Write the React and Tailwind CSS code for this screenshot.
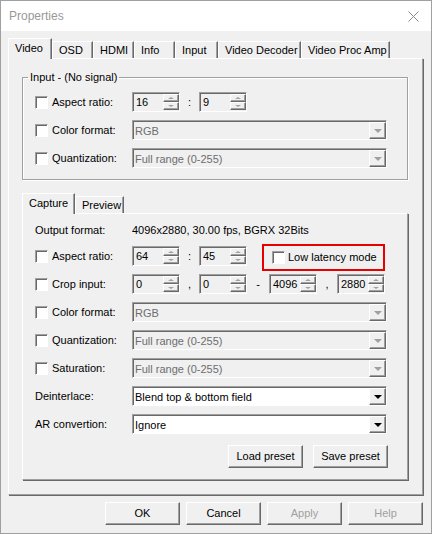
import React from 'react';

// classic 3D borders
const raised =
  'border border-t-white border-l-white border-r-[#696969] border-b-[#696969] shadow-[inset_-1px_-1px_0_#a0a0a0]';
const sunken =
  'border border-t-[#a0a0a0] border-l-[#a0a0a0] border-r-white border-b-white shadow-[inset_1px_1px_0_#696969]';

function Check() {
  return <span className={`block w-[13px] h-[13px] shrink-0 bg-white ${sunken}`} />;
}

function Label({ text, check = true }) {
  if (!check) return <span className="w-[97px] shrink-0">{text}</span>;
  return (
    <>
      <Check />
      <span className="ml-[4px] w-[80px] shrink-0">{text}</span>
    </>
  );
}

function Spin({ value }) {
  return (
    <div className={`flex h-[20px] w-[48px] shrink-0 bg-[#f0f0f0] ${sunken}`}>
      <span className="flex-1 pl-[3px] leading-[18px]">{value}</span>
      <div className="flex flex-col w-[16px] pt-px">
        <div className={`h-[8px] flex items-center justify-center bg-[#f0f0f0] ${raised}`}>
          <span className="w-0 h-0 border-x-[3px] border-x-transparent border-b-[2px] border-b-[#a0a0a0]" />
        </div>
        <div className={`h-[8px] flex items-center justify-center bg-[#f0f0f0] ${raised}`}>
          <span className="w-0 h-0 border-x-[3px] border-x-transparent border-t-[2px] border-t-[#a0a0a0]" />
        </div>
      </div>
    </div>
  );
}

function Combo({ value, enabled = false }) {
  return (
    <div className={`flex h-[20px] w-[255px] shrink-0 ${sunken} ${enabled ? 'bg-white' : 'bg-[#f0f0f0]'}`}>
      <span className={`flex-1 pl-[2px] pt-px leading-[18px] ${enabled ? 'text-black' : 'text-[#6d6d6d]'}`}>
        {value}
      </span>
      <div className={`w-[17px] mt-px flex items-center justify-center bg-[#f0f0f0] ${raised}`}>
        <span
          className={`w-0 h-0 border-x-[4px] border-x-transparent border-t-[4px] ${
            enabled ? 'border-t-black' : 'border-t-[#a0a0a0]'
          }`}
        />
      </div>
    </div>
  );
}

function Sep({ text, w }) {
  return <span className={`${w} shrink-0 text-center`}>{text}</span>;
}

function Btn({ children, disabled }) {
  return (
    <button
      type="button"
      className={`w-[75px] h-[23px] flex items-center justify-center bg-[#f0f0f0] ${raised} ${
        disabled ? 'text-[#a0a0a0]' : 'text-black'
      }`}
    >
      {children}
    </button>
  );
}

function Tab({ label, w, active }) {
  return (
    <div
      className={`${w} shrink-0 flex items-center pl-[6px] bg-[#f0f0f0] border-t border-l border-r border-t-white border-l-white border-r-[#696969] shadow-[inset_-1px_0_0_#a0a0a0] ${
        active ? 'h-[21px] -mb-px relative z-10 pb-[2px]' : 'h-[17px]'
      }`}
    >
      {label}
    </div>
  );
}

const Row = ({ children }) => <div className="flex items-center h-[20px]">{children}</div>;

const mainTabs = [
  ['Video', 'w-[44px]', true],
  ['OSD', 'w-[41px]'],
  ['HDMI', 'w-[41px]'],
  ['Info', 'w-[41px]'],
  ['Input', 'w-[43px]'],
  ['Video Decoder', 'w-[83px]'],
  ['Video Proc Amp', 'w-[89px]'],
];

export default function App() {
  return (
    <div className="w-[432px] h-[534px] border border-[#a0a0a0] bg-[#f0f0f0] font-['Liberation_Sans',Arial,sans-serif] text-[11px] text-black flex flex-col overflow-hidden">
      {/* title bar */}
      <div className="h-[30px] shrink-0 bg-white flex items-center justify-between pl-[8px] pr-[12px]">
        <span className="text-[12px] text-[#999999]">Properties</span>
        <svg width="11" height="11" viewBox="0 0 11 11">
          <path d="M0.5 0.5L10.5 10.5M10.5 0.5L0.5 10.5" stroke="#8a8a8a" strokeWidth="1" />
        </svg>
      </div>

      <div className="pt-[7px] pl-[7px]">
        {/* main tabs */}
        <div className="flex items-end h-[20px]">
          {mainTabs.map(([l, w, a]) => (
            <Tab key={l} label={l} w={w} active={a} />
          ))}
        </div>

        {/* main tab panel */}
        <div className="w-[415px] h-[437px] border border-t-white border-l-white border-r-[#a0a0a0] border-b-[#a0a0a0] shadow-[1px_1px_0_#696969] pl-[13px] pt-[12px]">
          <fieldset className="w-[386px] border border-[#a0a0a0] shadow-[1px_1px_0_white,inset_1px_1px_0_white] pl-[12px] pt-[8px] pb-[11px] flex flex-col gap-[8px]">
            <legend className="ml-[-7px] px-[2px] leading-[13px]">Input - (No signal)</legend>
            <Row>
              <Label text="Aspect ratio:" />
              <Spin value="16" />
              <Sep text=":" w="w-[19px]" />
              <Spin value="9" />
            </Row>
            <Row>
              <Label text="Color format:" />
              <Combo value="RGB" />
            </Row>
            <Row>
              <Label text="Quantization:" />
              <Combo value="Full range (0-255)" />
            </Row>
          </fieldset>

          {/* capture / preview tabs */}
          <div className="flex items-end h-[20px] mt-[13px]">
            <Tab label="Capture" w="w-[53px]" active />
            <Tab label="Preview" w="w-[49px]" />
          </div>
          <div className="w-[386px] h-[267px] border border-t-white border-l-white border-r-[#a0a0a0] border-b-[#a0a0a0] shadow-[1px_1px_0_#696969] pl-[12px] pt-[8px] flex flex-col gap-[8px]">
            <div className="flex items-center h-[16px]">
              <Label text="Output format:" check={false} />
              <span>4096x2880, 30.00 fps, BGRX 32Bits</span>
            </div>
            <Row>
              <Label text="Aspect ratio:" />
              <Spin value="64" />
              <Sep text=":" w="w-[19px]" />
              <Spin value="45" />
              <div className="ml-[15px] w-[123px] h-[27px] shrink-0 border-2 border-[#e60000] flex items-center pl-[8px] mt-[3px]">
                <Check />
                <span className="ml-[3px]">Low latency mode</span>
              </div>
            </Row>
            <Row>
              <Label text="Crop input:" />
              <Spin value="0" />
              <Sep text="," w="w-[19px]" />
              <Spin value="0" />
              <Sep text="-" w="w-[22px]" />
              <Spin value="4096" />
              <Sep text="," w="w-[20px]" />
              <Spin value="2880" />
            </Row>
            <Row>
              <Label text="Color format:" />
              <Combo value="RGB" />
            </Row>
            <Row>
              <Label text="Quantization:" />
              <Combo value="Full range (0-255)" />
            </Row>
            <Row>
              <Label text="Saturation:" />
              <Combo value="Full range (0-255)" />
            </Row>
            <Row>
              <Label text="Deinterlace:" check={false} />
              <Combo value="Blend top & bottom field" enabled />
            </Row>
            <Row>
              <Label text="AR convertion:" check={false} />
              <Combo value="Ignore" enabled />
            </Row>
            <div className="flex justify-end gap-[10px] pr-[19px] mt-[3px]">
              <Btn>Load preset</Btn>
              <Btn>Save preset</Btn>
            </div>
          </div>
        </div>
      </div>

      {/* dialog buttons */}
      <div className="flex justify-end gap-[6px] pr-[8px] mt-[7px]">
        <Btn>OK</Btn>
        <Btn>Cancel</Btn>
        <Btn disabled>Apply</Btn>
        <Btn disabled>Help</Btn>
      </div>
    </div>
  );
}
